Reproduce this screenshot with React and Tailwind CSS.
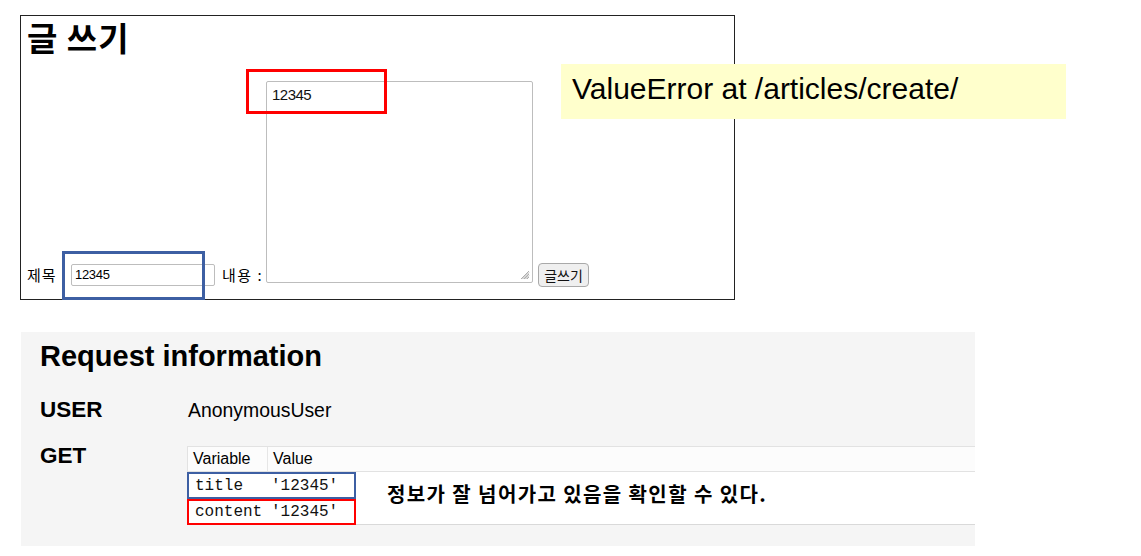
import React from "react";

const KR = { fontFamily: '"Noto Sans CJK KR", "Noto Sans", sans-serif' };
const SANS = { fontFamily: '"Liberation Sans", Arial, "Noto Sans CJK KR", sans-serif' };
const MONO = { fontFamily: '"Liberation Mono", "DejaVu Sans Mono", monospace' };

function FormBox() {
  return (
    <div className="relative ml-[20px] mt-[15px] flex h-[285px] w-[715px] flex-col border border-[#222] bg-white">
      <h1 className="ml-[6px] text-[33px] font-bold leading-[42px] tracking-[1px] text-black" style={KR}>
        글 쓰기
      </h1>
      <div className="mt-auto flex items-end pb-[12px] pl-[6px]" style={KR}>
        <span className="mb-[2px] w-[30px] whitespace-nowrap text-[15px] leading-[20px] tracking-[1px] text-black">제목</span>
        <div className="mb-[1px] ml-[14px] flex h-[22px] w-[144px] items-center rounded-[2px] border border-[#bdbdbd] bg-white pl-[3px] text-[13px] tracking-[-0.3px] text-black" style={SANS}>
          12345
        </div>
        <span className="mb-[2px] ml-[7px] w-[40px] whitespace-nowrap text-[15px] leading-[20px] tracking-[1.5px] text-black">내용 :</span>
        <div className="relative mb-[4px] ml-[4px] h-[202px] w-[267px] rounded-[2px] border border-[#bdbdbd] bg-white pl-[5px] pt-[3px] text-[15px] leading-[19px] tracking-[-0.5px] text-[#111]" style={SANS}>
          12345
          <svg className="absolute bottom-[2px] right-[2px]" width="11" height="11" viewBox="0 0 11 11">
            <path d="M10 2 L2 10 M10 5 L5 10 M10 8 L8 10 M10 3.5 L3.5 10 M10 6.5 L6.5 10" stroke="#999" strokeWidth="0.8" />
          </svg>
        </div>
        <button className="ml-[5px] flex h-[24px] w-[51px] items-center justify-center rounded-[4px] border border-[#a9a9a9] bg-[#efefef] text-[14px] text-[#111]" style={KR}>
          글쓰기
        </button>
      </div>
      {/* annotation boxes */}
      <div className="absolute left-[225px] top-[53px] h-[45px] w-[141px] border-[3px] border-[#ff0000]" />
      <div className="absolute left-[41px] top-[235px] h-[49px] w-[143px] border-[3px] border-[#3d5fa3]" />
    </div>
  );
}

function RequestInfo() {
  return (
    <div className="ml-[21px] mt-[32px] h-[214px] w-[954px] overflow-hidden bg-[#f5f5f5] pl-[19px] pt-[8px]" style={SANS}>
      <h2 className="text-[29px] font-bold leading-[32px] text-black">Request information</h2>
      <div className="mt-[25px] flex items-baseline">
        <div className="w-[148px] text-[22.5px] font-bold leading-[26px] text-black">USER</div>
        <div className="text-[19.4px] leading-[26px] text-black">AnonymousUser</div>
      </div>
      <div className="mt-[20px] flex items-start">
        <div className="w-[147px] text-[22.5px] font-bold leading-[26px] text-black">GET</div>
        <div className="relative mt-[3px] flex-1">
          <div className="flex h-[26px] border-l border-t border-b border-[#e2e2e2] bg-[#fcfcfc] text-[16px] leading-[24px] text-black">
            <div className="w-[80px] border-r border-[#e6e6e6] pl-[5px]">Variable</div>
            <div className="pl-[5px]">Value</div>
          </div>
          <div className="bg-white text-[16px] text-[#111]" style={MONO}>
            <div className="flex h-[27px] items-center">
              <div className="w-[80px] pl-[8px]">title</div>
              <div className="pl-[4px]">'12345'</div>
            </div>
            <div className="flex h-[26px] items-center border-b border-[#d9d9d9]">
              <div className="w-[80px] pl-[8px]">content</div>
              <div className="pl-[4px]">'12345'</div>
            </div>
          </div>
          <div className="absolute left-0 top-[26px] h-[27px] w-[169px] border-2 border-[#3d5fa3]" />
          <div className="absolute left-0 top-[53px] h-[26px] w-[169px] border-2 border-[#ff0000]" />
          <div className="absolute left-[200px] top-[35px] whitespace-nowrap text-[20px] font-bold leading-[26px] tracking-[1.4px] text-black" style={KR}>
            정보가 잘 넘어가고 있음을 확인할 수 있다.
          </div>
        </div>
      </div>
    </div>
  );
}

export default function App() {
  return (
    <div className="relative h-[556px] w-[1141px] overflow-hidden bg-white">
      <FormBox />
      <RequestInfo />
      <div className="absolute left-[561px] top-[64px] h-[55px] w-[505px] bg-[#ffffcc] pl-[11px] pt-[8px] text-[30px] leading-[34px] text-black" style={SANS}>
        ValueError at /articles/create/
      </div>
    </div>
  );
}
